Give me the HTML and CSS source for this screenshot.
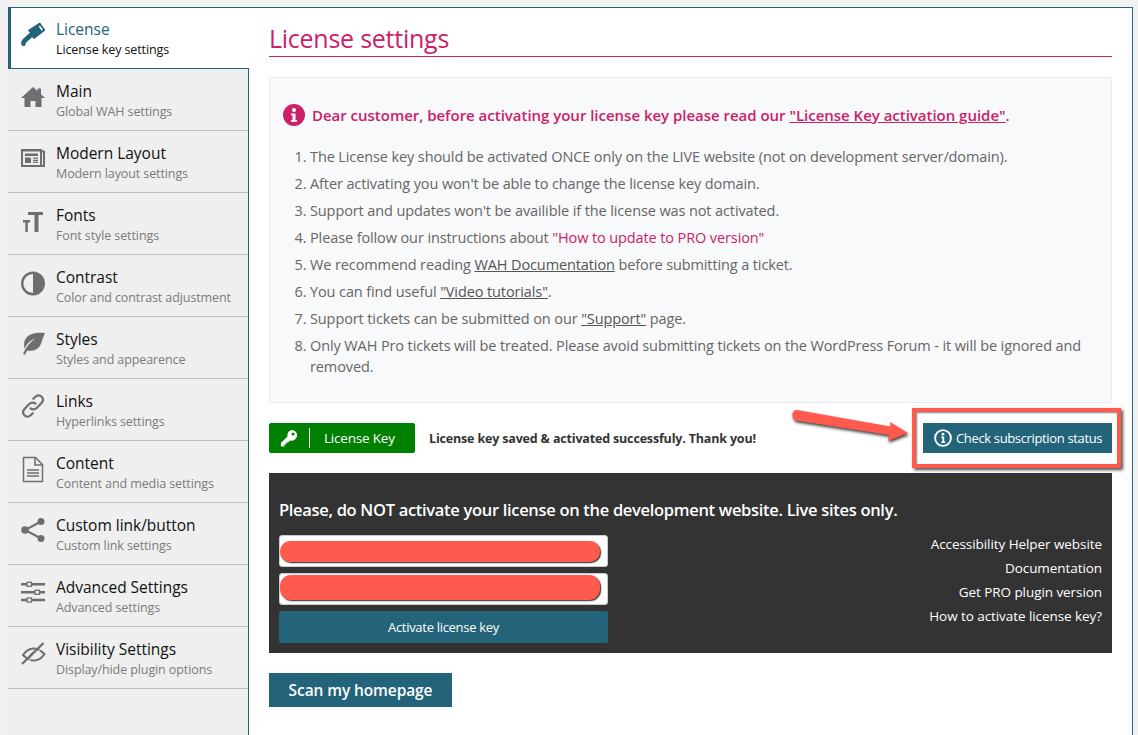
FILE: index.html
```html
<!DOCTYPE html>
<html lang="en">
<head>
<meta charset="utf-8">
<title>License settings</title>
<link rel="stylesheet" href="styles.css">
</head>
<body>
<div class="panel">
  <nav class="sidebar">
    <a class="tab active">
      <svg class="ico" viewBox="0 0 26 26"><path d="M19 3c.4-.5 1-.5 1.300 0L25 9.500c.3.400.2.900-.2 1.200l-10 7.900c-.4.300-.9.300-1.300 0L12 17.200 5.800 23l-.6 2.800-3 .2L1 23.500l1-3.500 8-7.600-1.600-1.500c-.3-.4-.3-.9.100-1.200z" fill="#23647a"/><path d="M19.300 6l3 4.200" stroke="#fff" stroke-width="1.500"/></svg>
      <span class="txt"><b>License</b><small>License key settings</small></span>
    </a>
    <a class="tab">
      <svg class="ico" viewBox="0 0 26 26"><path d="M13 5L1 16h3.500v9h6v-6h5v6h6v-9H25l-4-3.700V6.500h-3.500V9z" fill="#6d6e72"/></svg>
      <span class="txt"><b>Main</b><small>Global WAH settings</small></span>
    </a>
    <a class="tab">
      <svg class="ico" viewBox="0 0 26 26"><path fill-rule="evenodd" d="M1 5h21v1.500h3V23H1zM3 7.500V21h17V7.500zM22 8.500V21h1V8.500z" fill="#6d6e72"/><path d="M5 9.500h13v2.500H5zM5 13.500h6v5.500H5zM13 13.500h5v1.300h-5zM13 15.700h5V17h-5zM13 17.800h5V19h-5z" fill="#6d6e72"/></svg>
      <span class="txt"><b>Modern Layout</b><small>Modern layout settings</small></span>
    </a>
    <a class="tab">
      <svg class="ico" viewBox="0 0 26 26"><path d="M8 6h15v3h-4.500v17h-4V9H8z" fill="#6d6e72"/><path d="M3 14h7v2.500H7.800V26H5.300v-9.500H3z" fill="#6d6e72"/></svg>
      <span class="txt"><b>Fonts</b><small>Font style settings</small></span>
    </a>
    <a class="tab">
      <svg class="ico" viewBox="0 0 26 26"><circle cx="13" cy="15.500" r="10.800" fill="none" stroke="#6d6e72" stroke-width="2.400"/><path d="M13 4.500a11 11 0 0 1 0 22z" fill="#6d6e72"/></svg>
      <span class="txt"><b>Contrast</b><small>Color and contrast adjustment</small></span>
    </a>
    <a class="tab">
      <svg class="ico" viewBox="0 0 26 26"><path d="M25 3c-9-.7-16.500.8-19.500 6-1.700 3-1.800 6.500-1 9.800C6.500 14 10 10.500 16 8c-5 3.500-9.500 8-13 16l2.200.7c.7-1.800 1.300-2.900 2-4.200 6 .8 10.500-.5 13-5 1.700-3.200 2.500-8 4.800-12.500z" fill="#6d6e72"/></svg>
      <span class="txt"><b>Styles</b><small>Styles and appearence</small></span>
    </a>
    <a class="tab">
      <svg class="ico" viewBox="0 0 26 26"><path d="M10.500 16.500c2.500 1.500 5 .8 6.500-.8l4.500-4.700c1.900-2.100 1.800-4.600.1-6.300-1.800-1.800-4.400-1.800-6.300.1l-2 2M15.500 11.500c-2.500-1.500-5-.8-6.500.8l-4.500 4.700c-1.900 2.100-1.800 4.600-.1 6.300 1.800 1.800 4.400 1.800 6.300-.1l2-2" fill="none" stroke="#6d6e72" stroke-width="2.200" stroke-linecap="round"/></svg>
      <span class="txt"><b>Links</b><small>Hyperlinks settings</small></span>
    </a>
    <a class="tab">
      <svg class="ico" viewBox="0 0 26 26"><path d="M3.500 3.500h12l7 7v17h-19z" fill="none" stroke="#6d6e72" stroke-width="1.500" stroke-linejoin="round"/><path d="M15 3.500V11h7.500" fill="none" stroke="#6d6e72" stroke-width="1.500"/><path d="M7 16h12M7 19h12M7 22h12" stroke="#6d6e72" stroke-width="1.400"/></svg>
      <span class="txt"><b>Content</b><small>Content and media settings</small></span>
    </a>
    <a class="tab">
      <svg class="ico" viewBox="0 0 26 26"><path d="M21 5.500L5 14l16 8.500" fill="none" stroke="#6d6e72" stroke-width="2"/><circle cx="21" cy="5.500" r="3.500" fill="#6d6e72"/><circle cx="5" cy="14" r="3.800" fill="#6d6e72"/><circle cx="21" cy="22.500" r="3.500" fill="#6d6e72"/></svg>
      <span class="txt"><b>Custom link/button</b><small>Custom link settings</small></span>
    </a>
    <a class="tab">
      <svg class="ico" viewBox="0 0 26 26"><path d="M1 6.300h24M1 14.300h24M1 22h24" stroke="#6d6e72" stroke-width="2.400"/><rect x="7" y="4.300" width="4.500" height="4" fill="#efefef" stroke="#6d6e72" stroke-width="1.300"/><rect x="15" y="12.300" width="4.500" height="4" fill="#efefef" stroke="#6d6e72" stroke-width="1.300"/><rect x="7" y="20" width="4.500" height="4" fill="#efefef" stroke="#6d6e72" stroke-width="1.300"/></svg>
      <span class="txt"><b>Advanced Settings</b><small>Advanced settings</small></span>
    </a>
    <a class="tab">
      <svg class="ico" viewBox="0 0 26 26"><path d="M3 15c3-4.500 6.500-6.500 10.500-6.500S21 10.500 24.500 14c-3 4.500-6.500 6.500-10.500 6.500S6.500 18.500 3 15z" fill="none" stroke="#6d6e72" stroke-width="2"/><path d="M15 12a4.500 4.500 0 0 0-5 6l5-6z" fill="#6d6e72"/><path d="M23.500 3L2 24" stroke="#6d6e72" stroke-width="2.300"/><path d="M25 5L5.500 24.500" stroke="#efefef" stroke-width="1"/></svg>
      <span class="txt"><b>Visibility Settings</b><small>Display/hide plugin options</small></span>
    </a>
  </nav>
  <main class="content">
    <h1 class="title">License settings</h1>
    <section class="notice">
      <p class="lead">
        <svg class="lead-ico" viewBox="0 0 22 22"><circle cx="11" cy="11" r="11" fill="#cc2069"/><circle cx="11" cy="6" r="2" fill="#fff"/><path d="M8 9.500h4.500V16H14v1.800H8V16h1.500v-4.700H8z" fill="#fff"/></svg>
        <span>Dear customer, before activating your license key please read our <u>"License Key activation guide"</u>.</span>
      </p>
      <ol class="steps">
        <li>The License key should be activated ONCE only on the LIVE website (not on development server/domain).</li>
        <li>After activating you won't be able to change the license key domain.</li>
        <li>Support and updates won't be availible if the license was not activated.</li>
        <li>Please follow our instructions about <span class="pink">"How to update to PRO version"</span></li>
        <li>We recommend reading <u>WAH Documentation</u> before submitting a ticket.</li>
        <li>You can find useful <u>"Video tutorials"</u>.</li>
        <li>Support tickets can be submitted on our <u>"Support"</u> page.</li>
        <li>Only WAH Pro tickets will be treated. Please avoid submitting tickets on the WordPress Forum - it will be ignored and removed.</li>
      </ol>
    </section>
    <div class="status">
      <div class="status-left">
        <span class="badge">
          <svg class="badge-key" viewBox="0 0 20 20"><path d="M13 1a6 6 0 0 1 0 12c-.6 0-1.300-.1-1.900-.3L9 15H7v2H5v2.500H1v-4l7.300-7.300A6 6 0 0 1 13 1z" fill="#fff"/><circle cx="14.500" cy="5.500" r="1.700" fill="#008000"/></svg>
          <span class="badge-sep"></span>
          <span>License Key</span>
        </span>
        <strong class="saved">License key saved &amp; activated successfuly. Thank you!</strong>
      </div>
      <a class="check">
        <svg class="check-ico" viewBox="0 0 18 18"><circle cx="9" cy="9" r="7.900" fill="none" stroke="#fff" stroke-width="1.900"/><circle cx="9" cy="5.200" r="1.400" fill="#fff"/><path d="M7.300 7.600h2.900v5h1v1.400H7.300v-1.400h1V9h-1z" fill="#fff"/></svg>
        Check subscription status
      </a>
      <div class="callout"></div>
      <svg class="arrow" viewBox="0 0 120 40"><path d="M7 5l93.500 16.500-.5-4.500 18 11-20 8 1-6L6 15.500C1 14.500 1 4.500 7 5z" fill="#ff5a4d"/></svg>
    </div>
    <section class="dark">
      <h2 class="warn">Please, do NOT activate your license on the development website. Live sites only.</h2>
      <div class="dark-row">
        <form class="form">
          <div class="field"><span class="redact"></span></div>
          <div class="field"><span class="redact tall"></span></div>
          <button class="activate" type="button">Activate license key</button>
        </form>
        <ul class="links">
          <li>Accessibility Helper website</li>
          <li>Documentation</li>
          <li>Get PRO plugin version</li>
          <li>How to activate license key?</li>
        </ul>
      </div>
    </section>
    <button class="scan" type="button">Scan my homepage</button>
  </main>
</div>
</body>
</html>
```
FILE: styles.css
```css
* { box-sizing: border-box; }
html, body { margin: 0; height: 735px; overflow: hidden; }
body {
  background: #f1f1f1;
  padding: 7px 5px 0 8px;
  font-family: "Open Sans", "Noto Sans", sans-serif;
  color: #666;
}
.panel {
  display: flex;
  height: 728px;
  background: #fff;
  border-top: 1px solid #23647a;
  border-right: 1px solid #23647a;
}
.sidebar {
  width: 241px;
  flex: none;
  background: #efefef;
  border-right: 1px solid #23647a;
}
.tab {
  display: flex;
  height: 62px;
  padding: 12px 0 0 12px;
  border-bottom: 1px solid #bdbdbd;
}
.tab.active {
  height: 61px;
  background: #fff;
  margin-right: -1px;
  border-left: 3px solid #23647a;
  border-bottom: 1px solid #23647a;
  padding: 11px 0 0 9px;
  position: relative;
}
.ico { width: 26px; height: 26px; flex: none; margin-top: 1px; overflow: visible; }
.txt { margin-left: 10px; display: flex; flex-direction: column; }
.txt b {
  font-weight: 500;
  font-size: 15.500px;
  line-height: 20px;
  color: #111;
  letter-spacing: -.02px;
}
.txt small {
  font-size: 12.500px;
  line-height: 18px;
  margin-top: 2px;
  color: #7b7b7b;
  letter-spacing: -.1px;
}
.active .txt b { color: #23647a; }
.active .txt small { color: #111; }
.content { flex: 1; padding: 13px 20px 0 20px; min-width: 0; }
.title {
  margin: 0;
  font-weight: 400;
  font-size: 25px;
  line-height: 35px;
  color: #cc2069;
  border-bottom: 1px solid #cc2069;
  letter-spacing: -.25px;
}
.notice {
  margin-top: 20px;
  height: 326px;
  background: #f8f9fa;
  border: 1px solid #e9ecef;
  border-radius: 2px;
  padding: 26px 13px 0;
}
.lead {
  display: flex;
  align-items: center;
  margin: 0;
  font-size: 15px;
  font-weight: 600;
  line-height: 22px;
  color: #cc2069;
  letter-spacing: -.02px;
}
.lead-ico { width: 22px; height: 22px; margin-right: 7px; flex: none; }
.steps {
  margin: 20px 0 0;
  padding: 0 0 0 27px;
  font-size: 14.500px;
  line-height: 21px;
  letter-spacing: -.11px;
  color: #666;
}
.steps li { margin-bottom: 6px; }
.steps u { color: #555; }
.pink { color: #cc2069; }
.status {
  position: relative;
  display: flex;
  justify-content: space-between;
  align-items: center;
  height: 30px;
  margin-top: 20px;
}
.status-left { display: flex; align-items: center; }
.badge {
  display: flex;
  align-items: center;
  width: 146px;
  height: 30px;
  background: #008000;
  border-radius: 2px;
  color: #fff;
  font-size: 13.500px;
  letter-spacing: -.2px;
  padding-left: 11px;
}
.badge-key { width: 18px; height: 18px; }
.badge-sep { width: 1px; height: 20px; background: #fff; margin: 0 14px 0 11px; }
.saved {
  margin-left: 14px;
  font-size: 12.500px;
  font-weight: 700;
  color: #333;
  letter-spacing: -.17px;
}
.check {
  display: flex;
  align-items: center;
  width: 189px;
  height: 30px;
  background: #23647a;
  color: #fff;
  font-size: 13px;
  letter-spacing: -.35px;
  padding-left: 11px;
  white-space: nowrap;
}
.check-ico { width: 18px; height: 18px; margin-right: 4px; flex: none; }
.callout {
  position: absolute;
  right: -9px;
  top: -15px;
  width: 209px;
  height: 60px;
  border: 4px solid #ff5a4d;
  box-shadow: 2px 2px 3px rgba(0,0,0,.7), inset 1px 1px 2px rgba(0,0,0,.5);
}
.arrow {
  position: absolute;
  left: 521px;
  top: -18px;
  width: 120px;
  height: 40px;
  filter: drop-shadow(1px 2px 1.500px rgba(0,0,0,.75));
}
.dark {
  margin-top: 20px;
  height: 180px;
  background: #333;
  padding: 25px 10px 0;
}
.warn {
  margin: 0;
  color: #fff;
  font-size: 16.500px;
  font-weight: 600;
  line-height: 24px;
  letter-spacing: -.31px;
  white-space: nowrap;
}
.dark-row { display: flex; justify-content: space-between; margin-top: 13px; }
.form { width: 329px; display: flex; flex-direction: column; gap: 6px; }
.field {
  height: 32px;
  background: #fff;
  border: 1px solid #ccc;
  border-radius: 3px;
  padding: 5px 7px 0 0;
}
.redact {
  display: block;
  height: 21px;
  background: #ff5a4d;
  border-radius: 10px;
  box-shadow: 1px 1px 1.500px rgba(0,0,0,.85);
}
.redact.tall { height: 25px; margin-top: -4px; border-radius: 11px; }
.activate {
  height: 32px;
  margin-top: 0;
  border: 0;
  border-radius: 2px;
  background: #23647a;
  color: #fff;
  font: 13px "Open Sans", sans-serif;
  letter-spacing: -.3px;
}
.links {
  list-style: none;
  margin: -3px 0 0;
  padding: 0;
  text-align: right;
  color: #fff;
  font-size: 13.500px;
  line-height: 24px;
  letter-spacing: -.07px;
}
.scan {
  display: block;
  margin-top: 20px;
  width: 183px;
  height: 34px;
  border: 0;
  background: #23647a;
  color: #fff;
  font: 600 15.500px "Open Sans", sans-serif;
  letter-spacing: -.1px;
}
```
